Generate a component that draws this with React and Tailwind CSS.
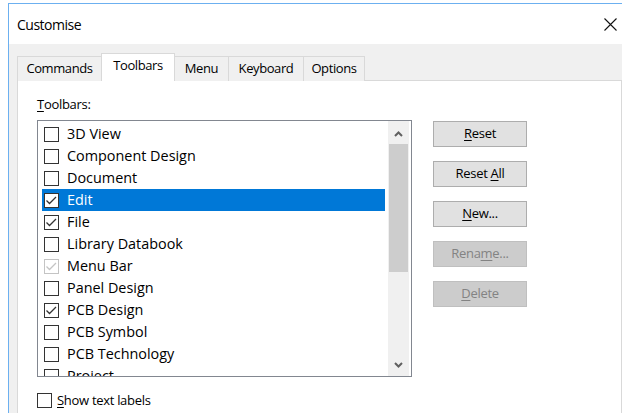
import React from "react";

const toolbars = [
  { label: "3D View", state: "off" },
  { label: "Component Design", state: "off" },
  { label: "Document", state: "off" },
  { label: "Edit", state: "on", selected: true },
  { label: "File", state: "on" },
  { label: "Library Databook", state: "off" },
  { label: "Menu Bar", state: "locked" },
  { label: "Panel Design", state: "off" },
  { label: "PCB Design", state: "on" },
  { label: "PCB Symbol", state: "off" },
  { label: "PCB Technology", state: "off" },
  { label: "Project", state: "off" },
];

const tabs = [
  { label: "Commands", w: "w-[85px]" },
  { label: "Toolbars", w: "w-[74px]", active: true },
  { label: "Menu", w: "w-[55px]" },
  { label: "Keyboard", w: "w-[76px]" },
  { label: "Options", w: "w-[62px]" },
];

function CheckBox({ state }) {
  const locked = state === "locked";
  const checked = state === "on" || locked;
  return (
    <div
      className={`w-[15px] h-[15px] shrink-0 border bg-white flex items-center justify-center ${
        locked ? "border-[#c4c4c4]" : "border-[#333333]"
      }`}
    >
      {checked && (
        <svg width="13" height="13" viewBox="0 0 13 13">
          <polyline
            points="1.5,6.5 4.5,9.5 11,3"
            fill="none"
            stroke={locked ? "#c4c4c4" : "#333333"}
            strokeWidth="1.3"
          />
        </svg>
      )}
    </div>
  );
}

function Chevron({ down }) {
  return (
    <svg width="9" height="6" viewBox="0 0 9 6">
      <polyline
        points={down ? "1,1 4.5,4.5 8,1" : "1,5 4.5,1.5 8,5"}
        fill="none"
        stroke="#606060"
        strokeWidth="2"
      />
    </svg>
  );
}

function Button({ children, disabled }) {
  return (
    <div
      className={`w-[94px] h-[26px] border flex items-center justify-center text-[13px] tracking-[-0.3px] ${
        disabled
          ? "bg-[#cccccc] border-[#bfbfbf] text-[#838383]"
          : "bg-[#e1e1e1] border-[#adadad] text-black"
      }`}
    >
      <span className="whitespace-pre">{children}</span>
    </div>
  );
}

const U = ({ children }) => <span className="underline underline-offset-2">{children}</span>;

export default function App() {
  return (
    <div className="w-[622px] h-[413px] overflow-hidden bg-white pt-[3px] pl-[8px] font-['Open_Sans',sans-serif] text-black">
      <div className="h-[440px] border-l border-t border-[#6cb0f0] bg-[#f0f0f0] flex flex-col">
        {/* title bar */}
        <div className="h-[40px] bg-white flex items-center justify-between pl-[8px] pr-[5px]">
          <span className="text-[14px] tracking-[-0.5px]">Customise</span>
          <svg width="13" height="13" viewBox="0 0 13 13">
            <path d="M0.5 0.5 L12.5 12.5 M12.5 0.5 L0.5 12.5" stroke="#111" strokeWidth="1.1" />
          </svg>
        </div>

        {/* body */}
        <div className="flex-1 pl-[8px] pt-[9px] flex flex-col">
          <div className="flex items-end h-[28px] relative z-10 -mb-px">
            {tabs.map((t, i) => (
              <div
                key={t.label}
                className={`${t.w} ${i > 0 ? "-ml-px" : ""} flex items-center justify-center text-[13px] tracking-[-0.4px] border border-b-0 ${
                  t.active
                    ? "h-[28px] bg-white border-[#d9d9d9] relative z-10 pb-[3px]"
                    : "h-[25px] bg-[#f0f0f0] border-[#d9d9d9]"
                }`}
              >
                {t.label}
              </div>
            ))}
          </div>

          {/* tab page */}
          <div className="w-[605px] flex-1 border border-[#d9d9d9] bg-white pl-[19px] pt-[14px] flex gap-[21px]">
            <div className="flex flex-col">
              <div className="h-[18px] leading-[18px] text-[13px] tracking-[-0.3px] mb-[7px]">
                <U>T</U>oolbars:
              </div>

              {/* list box */}
              <div className="w-[375px] h-[257px] border border-[#828790] flex">
                <div className="flex-1 overflow-hidden pl-[4px] pr-[3px] pt-[2px]">
                  {toolbars.map((r) => (
                    <div
                      key={r.label}
                      className={`h-[22px] flex items-center pl-[2px] gap-[8px] text-[14.4px] ${
                        r.selected ? "bg-[#0078d7] text-white" : ""
                      }`}
                    >
                      <CheckBox state={r.state} />
                      <span>{r.label}</span>
                    </div>
                  ))}
                </div>
                <div className="w-[21px] mr-[2px] bg-[#f0f0f0] flex flex-col">
                  <div className="h-[23px] pt-[2px] flex items-center justify-center">
                    <Chevron />
                  </div>
                  <div className="h-[128px] mx-[1px] bg-[#cdcdcd]" />
                  <div className="flex-1" />
                  <div className="h-[22px] flex items-center justify-center">
                    <Chevron down />
                  </div>
                </div>
              </div>

              <div className="mt-[14px] flex items-center gap-[5px] text-[13px] tracking-[-0.3px]">
                <CheckBox state="off" />
                <span>
                  <U>S</U>how text labels
                </span>
              </div>
            </div>

            <div className="pt-[26px] flex flex-col gap-[14px]">
              <Button>
                <U>R</U>eset
              </Button>
              <Button>
                Reset <U>A</U>ll
              </Button>
              <Button>
                <U>N</U>ew...
              </Button>
              <Button disabled>
                Rena<U>m</U>e...
              </Button>
              <Button disabled>
                <U>D</U>elete
              </Button>
            </div>
          </div>
        </div>
      </div>
    </div>
  );
}
